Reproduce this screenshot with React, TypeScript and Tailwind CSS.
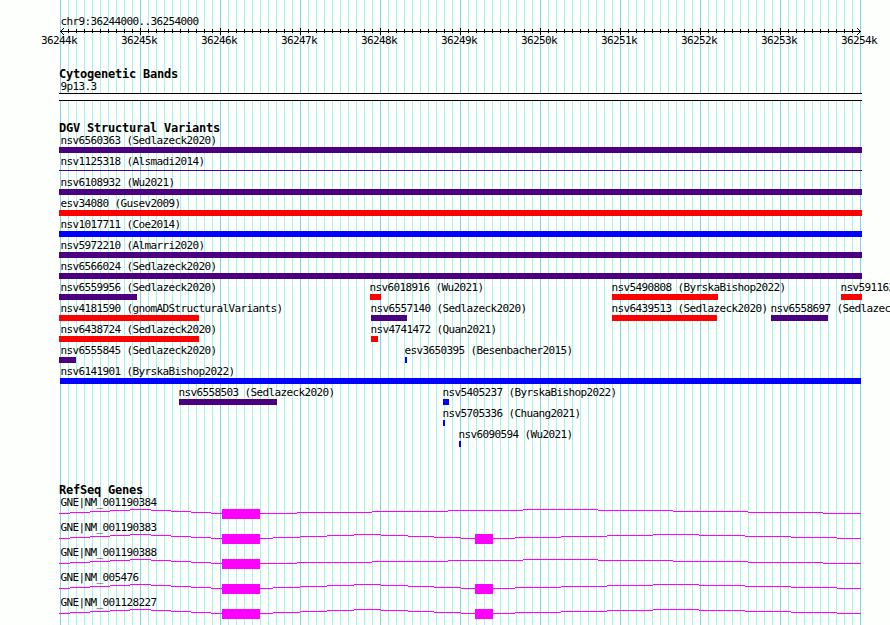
import type { ReactNode } from 'react';

const INDIGO = '#4b0082';
const RED = '#ff0000';
const BLUE = '#0000ff';
const MAGENTA = '#ff00ff';

type Variant = {
  name: string;
  start: number;
  end: number;
  color: string;
  thin?: boolean;
};

// one entry per packed row, start/end in pixels
const variantRows: Variant[][] = [
  [{ name: 'nsv6560363 (Sedlazeck2020)', start: 59, end: 862, color: INDIGO }],
  [{ name: 'nsv1125318 (Alsmadi2014)', start: 59, end: 862, color: INDIGO, thin: true }],
  [{ name: 'nsv6108932 (Wu2021)', start: 59, end: 862, color: INDIGO }],
  [{ name: 'esv34080 (Gusev2009)', start: 59, end: 862, color: RED }],
  [{ name: 'nsv1017711 (Coe2014)', start: 59, end: 862, color: BLUE }],
  [{ name: 'nsv5972210 (Almarri2020)', start: 59, end: 862, color: INDIGO }],
  [{ name: 'nsv6566024 (Sedlazeck2020)', start: 59, end: 862, color: INDIGO }],
  [
    { name: 'nsv6559956 (Sedlazeck2020)', start: 59, end: 137, color: INDIGO },
    { name: 'nsv6018916 (Wu2021)', start: 370, end: 381, color: RED },
    { name: 'nsv5490808 (ByrskaBishop2022)', start: 612, end: 718, color: RED },
    { name: 'nsv591162', start: 841, end: 862, color: RED },
  ],
  [
    { name: 'nsv4181590 (gnomADStructuralVariants)', start: 59, end: 199, color: RED },
    { name: 'nsv6557140 (Sedlazeck2020)', start: 371, end: 407, color: INDIGO },
    { name: 'nsv6439513 (Sedlazeck2020)', start: 612, end: 717, color: RED },
    { name: 'nsv6558697 (Sedlazec', start: 771, end: 828, color: INDIGO },
  ],
  [
    { name: 'nsv6438724 (Sedlazeck2020)', start: 59, end: 199, color: RED },
    { name: 'nsv4741472 (Quan2021)', start: 371, end: 378, color: RED },
  ],
  [
    { name: 'nsv6555845 (Sedlazeck2020)', start: 59, end: 76, color: INDIGO },
    { name: 'esv3650395 (Besenbacher2015)', start: 405, end: 407, color: BLUE },
  ],
  [{ name: 'nsv6141901 (ByrskaBishop2022)', start: 60, end: 861, color: BLUE }],
  [
    { name: 'nsv6558503 (Sedlazeck2020)', start: 179, end: 277, color: INDIGO },
    { name: 'nsv5405237 (ByrskaBishop2022)', start: 443, end: 449, color: BLUE },
  ],
  [{ name: 'nsv5705336 (Chuang2021)', start: 443, end: 445, color: BLUE }],
  [{ name: 'nsv6090594 (Wu2021)', start: 459, end: 461, color: BLUE }],
];

// x positions where an intron line steps by one pixel: four up, four down
const firstIntron = [59, 70, 90, 110, 130, 151, 171, 191, 211, 222];
const longIntron = [260, 297, 372, 448, 523, 598, 673, 748, 823, 861];
const middleIntron = [260, 273, 300, 327, 354, 381, 408, 434, 461, 475];
const lastIntron = [493, 515, 561, 607, 653, 699, 745, 791, 837, 861];

const genes = [
  { name: 'GNE|NM_001190384', twoExons: false },
  { name: 'GNE|NM_001190383', twoExons: true },
  { name: 'GNE|NM_001190388', twoExons: false },
  { name: 'GNE|NM_005476', twoExons: true },
  { name: 'GNE|NM_001128227', twoExons: true },
];

function Label({ x, y, children }: { x: number; y: number; children: ReactNode }) {
  return (
    <text x={x} y={y} fill="#000" className="whitespace-pre font-['DejaVu_Sans_Mono',monospace] text-[11px] tracking-[-0.622px]">
      {children}
    </text>
  );
}

function TrackTitle({ children }: { children: ReactNode }) {
  return (
    <h2 className="h-[14px] pt-px pl-[59px] font-['DejaVu_Sans_Mono',monospace] text-[12px] leading-[14px] font-bold tracking-[-0.224px] whitespace-pre">
      {children}
    </h2>
  );
}

function Grid() {
  const lines = Array.from({ length: 101 }, (_, i) => i);
  return (
    <svg className="absolute inset-0" width={890} height={625} shapeRendering="crispEdges">
      {lines.map((i) => (
        <rect key={i} x={60 + i * 8} y={0} width={1} height={625} fill={i % 10 === 0 ? '#87ceeb' : '#afeeee'} />
      ))}
    </svg>
  );
}

function Ruler() {
  const ticks = Array.from({ length: 99 }, (_, i) => i + 1);
  const labels = Array.from({ length: 11 }, (_, i) => i);
  return (
    <svg className="block" width={890} height={66}>
      <Label x={60.5} y={25}>chr9:36244000..36254000</Label>
      <g shapeRendering="crispEdges">
        <rect x={60} y={31} width={801} height={1} />
        {ticks.map((i) =>
          i % 10 === 0 ? (
            <rect key={i} x={60 + i * 8} y={28} width={1} height={7} />
          ) : (
            <rect key={i} x={60 + i * 8} y={29} width={1} height={4} />
          ),
        )}
        {[1, 2, 3].map((d) => (
          <g key={d}>
            <rect x={60 + d} y={31 - d} width={1} height={1} />
            <rect x={60 + d} y={31 + d} width={1} height={1} />
            <rect x={860 - d} y={31 - d} width={1} height={1} />
            <rect x={860 - d} y={31 + d} width={1} height={1} />
          </g>
        ))}
      </g>
      {labels.map((i) => (
        <Label key={i} x={41 + i * 80} y={44}>{`${36244 + i}k`}</Label>
      ))}
    </svg>
  );
}

function CytoBand() {
  return (
    <svg className="block" width={890} height={40}>
      <Label x={60.5} y={10}>9p13.3</Label>
      <g shapeRendering="crispEdges">
        <rect x={59} y={13} width={803} height={8} fill="#000" />
        <rect x={59} y={14} width={803} height={6} fill="#fff" />
      </g>
    </svg>
  );
}

function Variants() {
  return (
    <svg className="block" width={890} height={348}>
      {variantRows.map((row, i) => (
        <g key={i} transform={`translate(0 ${i * 21})`}>
          {row.map((v) => (
            <g key={v.name}>
              {/* labels of features cut by the left edge stay inside the panel */}
              <Label x={v.start <= 60 ? 60.5 : v.start - 0.5} y={10}>{v.name}</Label>
              <rect
                x={v.start}
                y={v.thin ? 15 : 13}
                width={v.end - v.start}
                height={v.thin ? 1 : 6}
                fill={v.color}
                shapeRendering="crispEdges"
              />
            </g>
          ))}
        </g>
      ))}
    </svg>
  );
}

function Intron({ edges }: { edges: number[] }) {
  return (
    <>
      {edges.slice(0, -1).map((x, i) => (
        <rect key={x} x={x} y={17 - Math.min(i, 8 - i)} width={edges[i + 1] - x} height={1} />
      ))}
    </>
  );
}

function Genes() {
  return (
    <svg className="block" width={890} height={129}>
      {genes.map((gene, i) => (
        <g key={gene.name} transform={`translate(0 ${i * 25})`}>
          <Label x={60.5} y={10}>{gene.name}</Label>
          <g fill={MAGENTA} shapeRendering="crispEdges">
            <Intron edges={firstIntron} />
            <rect x={222} y={13} width={38} height={10} />
            {gene.twoExons ? (
              <>
                <Intron edges={middleIntron} />
                <rect x={475} y={13} width={18} height={10} />
                <Intron edges={lastIntron} />
              </>
            ) : (
              <Intron edges={longIntron} />
            )}
          </g>
        </g>
      ))}
    </svg>
  );
}

export default function App() {
  return (
    <div className="relative h-[625px] w-[890px] overflow-hidden bg-[#fdfffd] text-black">
      <Grid />
      <main className="relative flex flex-col">
        <Ruler />
        <section className="h-[54px]">
          <TrackTitle>Cytogenetic Bands</TrackTitle>
          <CytoBand />
        </section>
        <section className="h-[362px]">
          <TrackTitle>DGV Structural Variants</TrackTitle>
          <Variants />
        </section>
        <section>
          <TrackTitle>RefSeq Genes</TrackTitle>
          <Genes />
        </section>
      </main>
    </div>
  );
}
